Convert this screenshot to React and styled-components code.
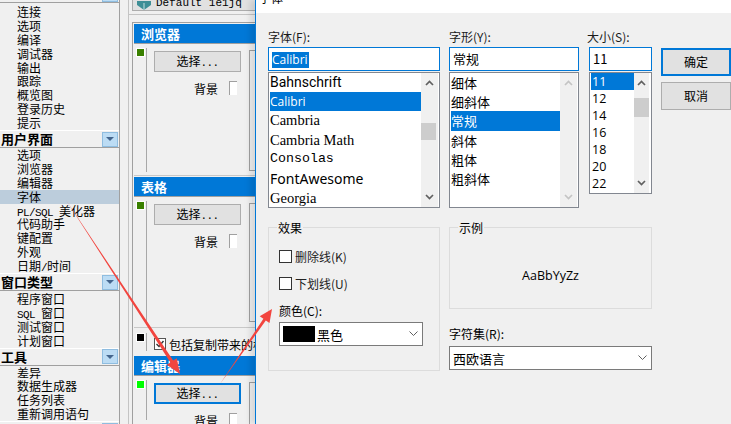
import React from "react";
import styled, { createGlobalStyle } from "styled-components";

const GlobalStyle = createGlobalStyle`
  html, body {
    margin: 0;
    padding: 0;
    background: #f0f0f0;
  }
`;

const cjk = `"Noto Sans CJK SC", "Liberation Sans", sans-serif`;

const groups = [
  { title: "", clipped: true, pad: 2, items: ["连接", "选项", "编译", "调试器", "输出", "跟踪", "概览图", "登录历史", "提示"] },
  { title: "用户界面", pad: 0, items: ["选项", "浏览器", "编辑器", "字体", "PL/SQL 美化器", "代码助手", "键配置", "外观", "日期/时间"] },
  { title: "窗口类型", pad: 1, items: ["程序窗口", "SQL 窗口", "测试窗口", "计划窗口"] },
  { title: "工具", pad: 0, items: ["差异", "数据生成器", "任务列表", "重新调用语句"] },
  { title: "", pad: 0, items: [] },
];

const fontNames = [
  { name: "Bahnschrift", font: "Roboto", size: 14, h: 19 },
  { name: "Calibri", font: "Open Sans", size: 12, h: 19, active: true },
  { name: "Cambria", font: "Liberation Serif", size: 14.5, h: 19 },
  { name: "Cambria Math", font: "Liberation Serif", size: 14.5, h: 20 },
  { name: "Consolas", font: "Liberation Mono", size: 13.3, h: 18 },
  { name: "FontAwesome", font: "Noto Sans", size: 14, h: 21 },
  { name: "Georgia", font: "Liberation Serif", size: 14.5, h: 18 },
];

const styleNames = ["细体", "细斜体", "常规", "斜体", "粗体", "粗斜体"];
const sizes = ["11", "12", "14", "16", "18", "20", "22"];

const Page = styled.div`
  position: relative;
  display: flex;
  width: 731px;
  height: 424px;
  overflow: hidden;
  background: #f0f0f0;
  color: #000;
  font-family: ${cjk};
`;

const Sidebar = styled.div`
  flex: none;
  width: 119px;
  height: 424px;
  overflow: hidden;
  border-right: 1px solid #a0a0a0;
`;

const GroupHeader = styled.div`
  display: flex;
  align-items: center;
  justify-content: space-between;
  box-sizing: border-box;
  height: 18px;
  margin-top: ${(p) => (p.$clipped ? "-15px" : "0")};
  padding-left: 1px;
  border-top: 1px solid #fff;
  border-bottom: 1px solid #a0a0a0;
  font-size: 13px;
  line-height: 14px;
  font-weight: 700;
`;

const CollapseButton = styled.span`
  display: flex;
  align-items: center;
  justify-content: center;
  box-sizing: border-box;
  width: 16px;
  height: 15px;
  margin-right: 1px;
  background: #bcdcf4;
  border: 1px solid #8fbde0;
  &::after {
    content: "";
    border-left: 4px solid transparent;
    border-right: 4px solid transparent;
    border-top: 4px solid #44668e;
  }
`;

const SideItems = styled.div`
  padding-top: ${(p) => p.$pad}px;
`;

const SideItem = styled.div`
  height: 13.9px;
  line-height: 14px;
  padding-left: 17px;
  font-size: 12px;
  white-space: nowrap;
  background: ${(p) => (p.$selected ? "#bccddc" : "transparent")};
`;

const Latin = styled.span`
  font-family: "Liberation Mono", monospace;
  font-size: 11px;
  letter-spacing: -0.6px;
  white-space: pre;
`;

const Middle = styled.div`
  flex: none;
  width: 126px;
  margin-left: 8px;
  height: 424px;
  overflow: hidden;
  border-left: 1px solid #c4c4c4;
`;

const ToolbarStrip = styled.div`
  display: flex;
  align-items: flex-end;
  gap: 5px;
  box-sizing: border-box;
  height: 11px;
  margin-left: 3px;
  padding-left: 4px;
  overflow: hidden;
  background: #e1e1e1;
  border-bottom: 1px solid #adadad;
  border-left: 1px solid #adadad;
  font-family: "Liberation Mono", monospace;
  font-size: 11px;
  line-height: 13px;
  white-space: nowrap;
`;

const Rule = styled.div`
  height: 1px;
  margin: 3px 0 7px;
  background: #c4c4c4;
`;

const Panel = styled.div`
  margin-left: 3px;
  padding: 1px 0 0 1px;
  border-top: 1px solid #a0a0a0;
  border-left: 1px solid #a0a0a0;
`;

const SectionHeader = styled.div`
  box-sizing: border-box;
  height: 20px;
  padding-left: 7px;
  line-height: 19px;
  background: #0078d7;
  border-bottom: 1px solid #a0a0a0;
  color: #fff;
  font-size: 13px;
  font-weight: 700;
`;

const SectionBody = styled.div`
  display: flex;
  box-sizing: border-box;
  height: ${(p) => p.$height}px;
  border-bottom: 1px solid #c8c8c8;
  margin-bottom: 1px;
`;

const Marker = styled.div`
  flex: none;
  box-sizing: border-box;
  width: 9px;
  height: 9px;
  margin: 4px 0 0 2px;
  border: 1px solid #fff;
  background: ${(p) => p.$color};
`;

const SectionRule = styled.div`
  flex: none;
  width: 1px;
  height: ${(p) => p.$height}px;
  margin: 4px 0 0 1px;
  background: #a8a8a8;
`;

const Controls = styled.div`
  flex: none;
  display: flex;
  flex-direction: column;
  width: 87px;
  margin: 7px 0 0 7px;
`;

const PickButton = styled.div`
  box-sizing: border-box;
  width: 87px;
  height: 21px;
  line-height: ${(p) => (p.$focused ? "16px" : "18px")};
  text-align: center;
  font-size: 12px;
  background: #e1e1e1;
  border: ${(p) => (p.$focused ? "2px solid #0078d7" : "1px solid #adadad")};
`;

const BackgroundRow = styled.div`
  display: flex;
  align-items: center;
  justify-content: flex-end;
  gap: 11px;
  height: 14px;
  margin-top: 9px;
  margin-right: 4px;
  font-size: 12px;
`;

const MiniCheck = styled.span`
  width: 7px;
  height: 13px;
  background: #fff;
  border-left: 1px solid #a0a0a0;
  border-top: 1px solid #a0a0a0;
`;

const SideBox = styled.div`
  flex: none;
  box-sizing: border-box;
  width: 12px;
  height: ${(p) => p.$height}px;
  margin: 6px 0 0 8px;
  border: 1px solid #a0a0a0;
  border-right: 0;
`;

const CopyRow = styled.div`
  display: flex;
  height: 27px;
`;

const CopyLabel = styled.div`
  display: flex;
  align-items: center;
  gap: 3px;
  margin: 8px 0 0 7px;
  height: 14px;
  font-size: 12px;
  white-space: nowrap;
`;

const BlackCheck = styled.span`
  display: flex;
  align-items: center;
  justify-content: center;
  box-sizing: border-box;
  width: 12px;
  height: 12px;
  background: #fff;
  border: 1px solid #555;
`;

const Dialog = styled.div`
  flex: none;
  width: 476px;
  height: 424px;
  border-left: 1px solid #0078d7;
  box-shadow: -5px 0 6px rgba(0, 0, 0, 0.1);
  background: #f0f0f0;
  z-index: 1;
`;

const TitleBar = styled.div`
  height: 13px;
  padding-left: 3px;
  overflow: hidden;
  background: #fff;
  font-size: 12px;
  line-height: 12px;
`;

const TitleText = styled.div`
  margin-top: -8px;
`;

const Fields = styled.div`
  display: flex;
  height: 195px;
  padding: 13px 0 0 12px;
`;

const FieldColumn = styled.div`
  flex: none;
  width: ${(p) => p.$width}px;
  margin-right: ${(p) => p.$gap}px;
`;

const FieldLabel = styled.div`
  height: 21px;
  margin-left: ${(p) => p.$shift || 0}px;
  line-height: 21px;
  font-size: 12px;
  color: #1a1a1a;
`;

const ValueInput = styled.div`
  box-sizing: border-box;
  height: 24px;
  padding: 0 3px;
  line-height: 22px;
  font-size: 13px;
  background: #fff;
  border: 1px solid #0078d7;
`;

const SelectedValue = styled.span`
  display: inline-block;
  height: 16px;
  line-height: 16px;
  padding-right: 1px;
  font-size: 12px;
  background: #0078d7;
  color: #fff;
  font-family: "Open Sans", sans-serif;
`;

const ListBox = styled.div`
  display: flex;
  box-sizing: border-box;
  height: ${(p) => p.$height}px;
  margin-top: 1px;
  padding: 0 1px;
  background: #fff;
  border: 1px solid #828790;
`;

const ListRows = styled.div`
  flex: 1;
  min-width: 0;
`;

const ListRow = styled.div`
  height: ${(p) => p.$height}px;
  line-height: ${(p) => p.$height}px;
  padding-left: ${(p) => p.$indent || 0}px;
  font-family: ${(p) => p.$font || cjk};
  font-size: ${(p) => p.$size || 13}px;
  white-space: nowrap;
  background: ${(p) => (p.$active ? "#0078d7" : "transparent")};
  color: ${(p) => (p.$active ? "#fff" : "#000")};
`;

const ScrollBar = styled.div`
  position: relative;
  flex: none;
  display: flex;
  flex-direction: column;
  justify-content: space-between;
  align-items: center;
  width: ${(p) => p.$width}px;
  height: ${(p) => p.$height}px;
  margin: ${(p) => p.$margin || "0"};
  padding: 7px 0;
  box-sizing: border-box;
  background: #f0f0f0;
  color: ${(p) => (p.$disabled ? "#c4c4c4" : "#606060")};
`;

const Thumb = styled.div`
  position: absolute;
  left: 0;
  width: 15px;
  top: ${(p) => p.$top}px;
  height: ${(p) => p.$height}px;
  background: #cdcdcd;
`;

const ButtonColumn = styled.div`
  flex: none;
  display: flex;
  flex-direction: column;
  gap: 6px;
  padding-top: 22px;
`;

const DialogButton = styled.div`
  box-sizing: border-box;
  width: 70px;
  height: 28px;
  line-height: ${(p) => (p.$primary ? "24px" : "26px")};
  text-align: center;
  font-size: 12px;
  background: #e1e1e1;
  border: ${(p) => (p.$primary ? "2px solid #0078d7" : "1px solid #adadad")};
`;

const LowerRow = styled.div`
  display: flex;
  padding: 6px 0 0 12px;
`;

const EffectsBox = styled.div`
  flex: none;
  box-sizing: border-box;
  width: 172px;
  height: 144px;
  margin-right: 9px;
  padding: 21px 0 0 10px;
  position: relative;
  border: 1px solid #dcdcdc;
`;

const Legend = styled.span`
  position: absolute;
  top: -7px;
  left: 8px;
  padding: 0 1px;
  height: 14px;
  line-height: 14px;
  background: #f0f0f0;
  font-family: ${cjk};
  font-size: 12px;
`;

const CheckRow = styled.div`
  display: flex;
  align-items: center;
  gap: 3px;
  height: 14px;
  margin-bottom: 13px;
  font-size: 12px;
  color: #222;
`;

const CheckBox = styled.span`
  box-sizing: border-box;
  width: 13px;
  height: 13px;
  background: #fff;
  border: 1px solid #333;
`;

const ColorLabel = styled.div`
  height: 16px;
  margin-bottom: 3px;
  line-height: 16px;
  font-size: 12px;
`;

const ComboBox = styled.div`
  display: flex;
  align-items: center;
  gap: 2px;
  box-sizing: border-box;
  width: ${(p) => p.$width}px;
  height: 24px;
  padding: 0 4px 0 3px;
  background: #fff;
  border: 1px solid #7a7a7a;
  font-size: 13px;
`;

const ColorSwatch = styled.span`
  width: 32px;
  height: 16px;
  background: #000;
`;

const ComboText = styled.span`
  flex: 1;
`;

const RightStack = styled.div`
  flex: none;
  width: 203px;
`;

const SampleBox = styled.div`
  position: relative;
  display: flex;
  align-items: center;
  justify-content: center;
  box-sizing: border-box;
  height: 82px;
  padding-top: 14px;
  border: 1px solid #dcdcdc;
  font-family: "Open Sans", sans-serif;
  font-size: 12.5px;
`;

const CharsetLabel = styled.div`
  height: 16px;
  margin: 17px 0 4px;
  line-height: 16px;
  font-size: 12px;
`;

const ArrowLayer = styled.svg`
  position: absolute;
  left: 0;
  top: 0;
  z-index: 2;
  pointer-events: none;
`;

// SimSun-like half width latin, the tool font has ascii at half the cjk width
const MixedText = ({ text }) =>
  text.split(/([\x20-\x7e]+)/).map((part, i) =>
    /^[\x20-\x7e]+$/.test(part) ? <Latin key={i}>{part}</Latin> : part
  );

const Chevron = ({ up }) => (
  <svg width="9" height="6" viewBox="0 0 9 6">
    <path d={up ? "M1 5 L4.5 1.5 L8 5" : "M1 1 L4.5 4.5 L8 1"} fill="none" stroke="currentColor" strokeWidth="1.7" />
  </svg>
);

const ComboChevron = () => (
  <svg width="9" height="6" viewBox="0 0 9 6">
    <path d="M0.5 0.5 L4.5 4.5 L8.5 0.5" fill="none" stroke="#606060" strokeWidth="1" />
  </svg>
);

const Section = ({ title, color, height, boxHeight, ruleHeight, focused }) => (
  <>
    <SectionHeader>{title}</SectionHeader>
    <SectionBody $height={height}>
      <Marker $color={color} />
      <SectionRule $height={ruleHeight} />
      <Controls>
        <PickButton $focused={focused}>
          <MixedText text="选择..." />
        </PickButton>
        <BackgroundRow>
          背景
          <MiniCheck />
        </BackgroundRow>
      </Controls>
      <SideBox $height={boxHeight} />
    </SectionBody>
  </>
);

export default function App() {
  return (
    <Page>
      <GlobalStyle />
      <Sidebar>
        {groups.map((group, index) => (
          <div key={index}>
            <GroupHeader $clipped={group.clipped}>
              <span>{group.title}</span>
              <CollapseButton />
            </GroupHeader>
            <SideItems $pad={group.pad}>
              {group.items.map((item) => (
                <SideItem key={item} $selected={item === "字体"}>
                  <MixedText text={item} />
                </SideItem>
              ))}
            </SideItems>
          </div>
        ))}
      </Sidebar>

      <Middle>
        <ToolbarStrip>
          <svg width="14" height="9" viewBox="0 0 14 9">
            <path d="M0 0 H14 V4 L7 9 L0 4 Z" fill="#3f8f96" />
            <path d="M7 2 V9" stroke="#c6e0e0" strokeWidth="1" />
          </svg>
          Default 1e1jq
        </ToolbarStrip>
        <Rule />
        <Panel>
          <Section title="浏览器" color="#3a8000" height={132} boxHeight={121} ruleHeight={124} />
          <Section title="表格" color="#3a8000" height={131} boxHeight={119} ruleHeight={124} />
          <CopyRow>
            <Marker $color="#000" />
            <SectionRule $height={18} />
            <CopyLabel>
              <BlackCheck>
                <svg width="10" height="10" viewBox="0 0 10 10">
                  <path d="M1.5 5 L4 7.5 L8.5 2" fill="none" stroke="#333" strokeWidth="1.4" />
                </svg>
              </BlackCheck>
              包括复制带来的格式
            </CopyLabel>
          </CopyRow>
          <Section title="编辑器" color="#00ff00" height={60} boxHeight={50} ruleHeight={40} focused />
        </Panel>
      </Middle>

      <Dialog>
        <TitleBar>
          <TitleText>字体</TitleText>
        </TitleBar>
        <Fields>
          <FieldColumn $width={172} $gap={9}>
            <FieldLabel>字体(F):</FieldLabel>
            <ValueInput>
              <SelectedValue>Calibri</SelectedValue>
            </ValueInput>
            <ListBox $height={136}>
              <ListRows>
                {fontNames.map((f) => (
                  <ListRow key={f.name} $height={f.h} $font={f.font} $size={f.size} $active={f.active}>
                    {f.name}
                  </ListRow>
                ))}
              </ListRows>
              <ScrollBar $width={17} $height={134}>
                <Chevron up />
                <Thumb $top={50} $height={17} />
                <Chevron />
              </ScrollBar>
            </ListBox>
          </FieldColumn>

          <FieldColumn $width={130} $gap={10}>
            <FieldLabel>字形(Y):</FieldLabel>
            <ValueInput>常规</ValueInput>
            <ListBox $height={136}>
              <ListRows>
                {styleNames.map((s) => (
                  <ListRow key={s} $height={19.2} $size={13} $active={s === "常规"}>
                    {s}
                  </ListRow>
                ))}
              </ListRows>
              <ScrollBar $width={17} $height={134} $disabled>
                <Chevron up />
                <Chevron />
              </ScrollBar>
            </ListBox>
          </FieldColumn>

          <FieldColumn $width={63} $gap={9}>
            <FieldLabel $shift={-2}>大小(S):</FieldLabel>
            <ValueInput>11</ValueInput>
            <ListBox $height={122}>
              <ListRows>
                {sizes.map((s) => (
                  <ListRow key={s} $height={17} $indent={1} $font="Open Sans" $size={12.5} $active={s === "11"}>
                    {s}
                  </ListRow>
                ))}
              </ListRows>
              <ScrollBar $width={15} $height={120} $margin="0 1px 0 0">
                <Chevron up />
                <Thumb $top={25} $height={19} />
                <Chevron />
              </ScrollBar>
            </ListBox>
          </FieldColumn>

          <ButtonColumn>
            <DialogButton $primary>确定</DialogButton>
            <DialogButton>取消</DialogButton>
          </ButtonColumn>
        </Fields>

        <LowerRow>
          <EffectsBox>
            <Legend>效果</Legend>
            <CheckRow>
              <CheckBox />
              删除线(K)
            </CheckRow>
            <CheckRow>
              <CheckBox />
              下划线(U)
            </CheckRow>
            <ColorLabel>颜色(C):</ColorLabel>
            <ComboBox $width={144}>
              <ColorSwatch />
              <ComboText>黑色</ComboText>
              <ComboChevron />
            </ComboBox>
          </EffectsBox>
          <RightStack>
            <SampleBox>
              <Legend>示例</Legend>
              AaBbYyZz
            </SampleBox>
            <CharsetLabel>字符集(R):</CharsetLabel>
            <ComboBox $width={203}>
              <ComboText>西欧语言</ComboText>
              <ComboChevron />
            </ComboBox>
          </RightStack>
        </LowerRow>
      </Dialog>

      <ArrowLayer width="731" height="424" viewBox="0 0 731 424">
        <polygon points="66,200 173.2,360.6 176.8,358.2 180,374 166.8,364.8 170.4,362.4" fill="#f2453f" />
        <polygon points="220,384 263.4,318.8 259.7,316.3 272,309 269.5,323.1 265.8,320.6" fill="#f2453f" />
      </ArrowLayer>
    </Page>
  );
}
